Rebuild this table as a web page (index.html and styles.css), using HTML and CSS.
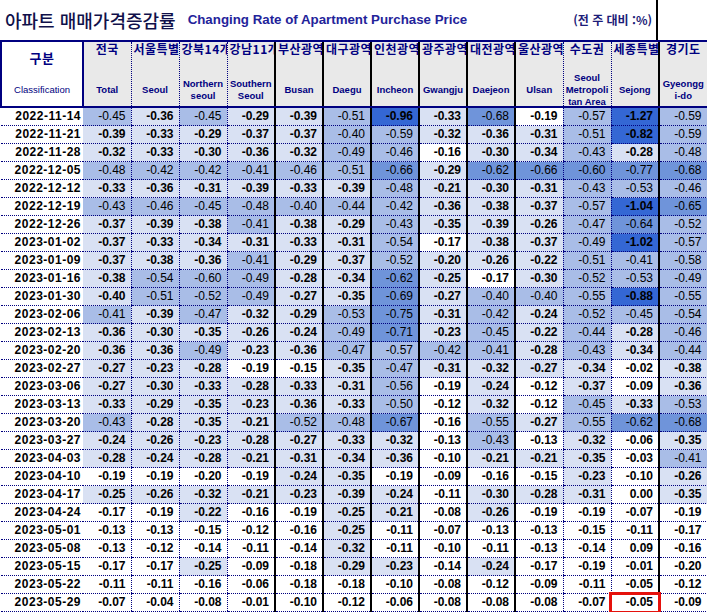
FILE: index.html
```html
<!DOCTYPE html>
<html lang="ko">
<head>
<meta charset="utf-8">
<title>아파트 매매가격증감률</title>
<link rel="stylesheet" href="styles.css">
</head>
<body>
<div class="titlebar">
  <div class="title-main">
    <span class="title-ko">아파트 매매가격증감률</span>
    <span class="title-en">Changing Rate of Apartment Purchase Price</span>
    <span class="unit">(전 주 대비 :%)</span>
  </div>
  <div class="title-side"></div>
</div>
<table class="grid">
  <colgroup>
    <col class="c-cls">
    <col class="c dot">
    <col class="c dot">
    <col class="c dot">
    <col class="c thick">
    <col class="c thick">
    <col class="c thick">
    <col class="c thick">
    <col class="c thick">
    <col class="c thick">
    <col class="c dot">
    <col class="c dot">
    <col class="c thick">
    <col class="c dot">
  </colgroup>
  <thead>
    <tr>
      <th class="cls"><div class="hd"><div class="ko ko-cls">구분</div><div class="en en-cls">Classification</div></div></th>
      <th><div class="hd"><div class="ko">전국</div><div class="en">Total</div></div></th>
      <th><div class="hd"><div class="ko ko-cut">서울특별</div><div class="en">Seoul</div></div></th>
      <th><div class="hd"><div class="ko ko-cut">강북14개</div><div class="en">Northern<br>seoul</div></div></th>
      <th><div class="hd"><div class="ko ko-cut">강남11개</div><div class="en">Southern<br>Seoul</div></div></th>
      <th><div class="hd"><div class="ko ko-cut">부산광역</div><div class="en">Busan</div></div></th>
      <th><div class="hd"><div class="ko ko-cut">대구광역</div><div class="en">Daegu</div></div></th>
      <th><div class="hd"><div class="ko ko-cut">인천광역</div><div class="en">Incheon</div></div></th>
      <th><div class="hd"><div class="ko ko-cut">광주광역</div><div class="en">Gwangju</div></div></th>
      <th><div class="hd"><div class="ko ko-cut">대전광역</div><div class="en">Daejeon</div></div></th>
      <th><div class="hd"><div class="ko ko-cut">울산광역</div><div class="en">Ulsan</div></div></th>
      <th><div class="hd"><div class="ko">수도권</div><div class="en en-clip">Seoul<br>Metropoli<br>tan Area</div></div></th>
      <th><div class="hd"><div class="ko ko-cut">세종특별</div><div class="en">Sejong</div></div></th>
      <th><div class="hd"><div class="ko">경기도</div><div class="en">Gyeongg<br>i-do</div></div></th>
    </tr>
  </thead>
  <tbody>
    <tr><td class="date">2022-11-14</td><td class="l2">-0.45</td><td class="l1">-0.36</td><td class="l2">-0.45</td><td class="l1">-0.29</td><td class="l1">-0.39</td><td class="l2">-0.51</td><td class="l4">-0.96</td><td class="l1">-0.33</td><td class="l3">-0.68</td><td>-0.19</td><td class="l2">-0.57</td><td class="l4">-1.27</td><td class="l2">-0.59</td></tr>
    <tr><td class="date">2022-11-21</td><td class="l1">-0.39</td><td class="l1">-0.33</td><td class="l1">-0.29</td><td class="l1">-0.37</td><td class="l1">-0.37</td><td class="l2">-0.40</td><td class="l2">-0.59</td><td class="l1">-0.32</td><td class="l1">-0.36</td><td class="l1">-0.31</td><td class="l2">-0.51</td><td class="l4">-0.82</td><td class="l2">-0.59</td></tr>
    <tr><td class="date">2022-11-28</td><td class="l1">-0.32</td><td class="l1">-0.33</td><td class="l1">-0.30</td><td class="l1">-0.36</td><td class="l1">-0.32</td><td class="l2">-0.49</td><td class="l2">-0.46</td><td>-0.16</td><td class="l1">-0.30</td><td class="l1">-0.34</td><td class="l2">-0.43</td><td class="l1">-0.28</td><td class="l2">-0.48</td></tr>
    <tr><td class="date">2022-12-05</td><td class="l2">-0.48</td><td class="l2">-0.42</td><td class="l2">-0.42</td><td class="l2">-0.41</td><td class="l2">-0.46</td><td class="l2">-0.51</td><td class="l3">-0.66</td><td class="l1">-0.29</td><td class="l3">-0.62</td><td class="l3">-0.66</td><td class="l3">-0.60</td><td class="l3">-0.77</td><td class="l3">-0.68</td></tr>
    <tr><td class="date">2022-12-12</td><td class="l1">-0.33</td><td class="l1">-0.36</td><td class="l1">-0.31</td><td class="l1">-0.39</td><td class="l1">-0.33</td><td class="l1">-0.39</td><td class="l2">-0.48</td><td class="l1">-0.21</td><td class="l1">-0.30</td><td class="l1">-0.31</td><td class="l2">-0.43</td><td class="l2">-0.53</td><td class="l2">-0.46</td></tr>
    <tr><td class="date">2022-12-19</td><td class="l2">-0.43</td><td class="l2">-0.46</td><td class="l2">-0.45</td><td class="l2">-0.48</td><td class="l2">-0.40</td><td class="l2">-0.44</td><td class="l2">-0.42</td><td class="l1">-0.36</td><td class="l1">-0.38</td><td class="l1">-0.37</td><td class="l2">-0.57</td><td class="l4">-1.04</td><td class="l3">-0.65</td></tr>
    <tr><td class="date">2022-12-26</td><td class="l1">-0.37</td><td class="l1">-0.39</td><td class="l1">-0.38</td><td class="l2">-0.41</td><td class="l1">-0.38</td><td class="l1">-0.29</td><td class="l2">-0.43</td><td class="l1">-0.35</td><td class="l1">-0.39</td><td class="l1">-0.26</td><td class="l2">-0.47</td><td class="l3">-0.64</td><td class="l2">-0.52</td></tr>
    <tr><td class="date">2023-01-02</td><td class="l1">-0.37</td><td class="l1">-0.33</td><td class="l1">-0.34</td><td class="l1">-0.31</td><td class="l1">-0.33</td><td class="l1">-0.31</td><td class="l2">-0.54</td><td>-0.17</td><td class="l1">-0.38</td><td class="l1">-0.37</td><td class="l2">-0.49</td><td class="l4">-1.02</td><td class="l2">-0.57</td></tr>
    <tr><td class="date">2023-01-09</td><td class="l1">-0.37</td><td class="l1">-0.38</td><td class="l1">-0.36</td><td class="l2">-0.41</td><td class="l1">-0.29</td><td class="l1">-0.37</td><td class="l2">-0.52</td><td class="l1">-0.20</td><td class="l1">-0.26</td><td class="l1">-0.22</td><td class="l2">-0.51</td><td class="l2">-0.41</td><td class="l2">-0.58</td></tr>
    <tr><td class="date">2023-01-16</td><td class="l1">-0.38</td><td class="l2">-0.54</td><td class="l2">-0.60</td><td class="l2">-0.49</td><td class="l1">-0.28</td><td class="l1">-0.34</td><td class="l3">-0.62</td><td class="l1">-0.25</td><td>-0.17</td><td class="l1">-0.30</td><td class="l2">-0.52</td><td class="l2">-0.53</td><td class="l2">-0.49</td></tr>
    <tr><td class="date">2023-01-30</td><td class="l1">-0.40</td><td class="l2">-0.51</td><td class="l2">-0.52</td><td class="l2">-0.49</td><td class="l1">-0.27</td><td class="l1">-0.35</td><td class="l3">-0.69</td><td class="l1">-0.27</td><td class="l2">-0.40</td><td class="l2">-0.40</td><td class="l2">-0.55</td><td class="l4">-0.88</td><td class="l2">-0.55</td></tr>
    <tr><td class="date">2023-02-06</td><td class="l2">-0.41</td><td class="l1">-0.39</td><td class="l2">-0.47</td><td class="l1">-0.32</td><td class="l1">-0.29</td><td class="l2">-0.53</td><td class="l3">-0.75</td><td class="l1">-0.31</td><td class="l2">-0.42</td><td class="l1">-0.24</td><td class="l2">-0.52</td><td class="l2">-0.45</td><td class="l2">-0.54</td></tr>
    <tr><td class="date">2023-02-13</td><td class="l1">-0.36</td><td class="l1">-0.30</td><td class="l1">-0.35</td><td class="l1">-0.26</td><td class="l1">-0.24</td><td class="l2">-0.49</td><td class="l3">-0.71</td><td class="l1">-0.23</td><td class="l2">-0.45</td><td class="l1">-0.22</td><td class="l2">-0.44</td><td class="l1">-0.28</td><td class="l2">-0.46</td></tr>
    <tr><td class="date">2023-02-20</td><td class="l1">-0.36</td><td class="l1">-0.36</td><td class="l2">-0.49</td><td class="l1">-0.23</td><td class="l1">-0.36</td><td class="l2">-0.47</td><td class="l2">-0.57</td><td class="l2">-0.42</td><td class="l2">-0.41</td><td class="l1">-0.28</td><td class="l2">-0.43</td><td class="l1">-0.34</td><td class="l2">-0.44</td></tr>
    <tr><td class="date">2023-02-27</td><td class="l1">-0.27</td><td class="l1">-0.23</td><td class="l1">-0.28</td><td>-0.19</td><td>-0.15</td><td class="l1">-0.35</td><td class="l2">-0.47</td><td class="l1">-0.31</td><td class="l1">-0.32</td><td class="l1">-0.27</td><td class="l1">-0.34</td><td>-0.02</td><td class="l1">-0.38</td></tr>
    <tr><td class="date">2023-03-06</td><td class="l1">-0.27</td><td class="l1">-0.30</td><td class="l1">-0.33</td><td class="l1">-0.28</td><td class="l1">-0.33</td><td class="l1">-0.31</td><td class="l2">-0.56</td><td>-0.19</td><td class="l1">-0.24</td><td>-0.12</td><td class="l1">-0.37</td><td>-0.09</td><td class="l1">-0.36</td></tr>
    <tr><td class="date">2023-03-13</td><td class="l1">-0.33</td><td class="l1">-0.29</td><td class="l1">-0.35</td><td class="l1">-0.23</td><td class="l1">-0.36</td><td class="l1">-0.33</td><td class="l2">-0.50</td><td>-0.12</td><td class="l1">-0.32</td><td>-0.12</td><td class="l2">-0.45</td><td class="l1">-0.33</td><td class="l2">-0.53</td></tr>
    <tr><td class="date">2023-03-20</td><td class="l2">-0.43</td><td class="l1">-0.28</td><td class="l1">-0.35</td><td class="l1">-0.21</td><td class="l2">-0.52</td><td class="l2">-0.48</td><td class="l3">-0.67</td><td>-0.16</td><td class="l2">-0.55</td><td class="l1">-0.27</td><td class="l2">-0.55</td><td class="l3">-0.62</td><td class="l3">-0.68</td></tr>
    <tr><td class="date">2023-03-27</td><td class="l1">-0.24</td><td class="l1">-0.26</td><td class="l1">-0.23</td><td class="l1">-0.28</td><td class="l1">-0.27</td><td class="l1">-0.33</td><td class="l1">-0.32</td><td>-0.13</td><td class="l2">-0.43</td><td>-0.13</td><td class="l1">-0.32</td><td>-0.06</td><td class="l1">-0.35</td></tr>
    <tr><td class="date">2023-04-03</td><td class="l1">-0.28</td><td class="l1">-0.24</td><td class="l1">-0.28</td><td class="l1">-0.21</td><td class="l1">-0.31</td><td class="l1">-0.34</td><td class="l1">-0.36</td><td>-0.10</td><td class="l1">-0.21</td><td class="l1">-0.21</td><td class="l1">-0.35</td><td>-0.03</td><td class="l2">-0.41</td></tr>
    <tr><td class="date">2023-04-10</td><td>-0.19</td><td>-0.19</td><td>-0.20</td><td>-0.19</td><td class="l1">-0.24</td><td class="l1">-0.35</td><td>-0.19</td><td>-0.09</td><td>-0.16</td><td>-0.15</td><td class="l1">-0.23</td><td>-0.10</td><td class="l1">-0.26</td></tr>
    <tr><td class="date">2023-04-17</td><td class="l1">-0.25</td><td class="l1">-0.26</td><td class="l1">-0.32</td><td class="l1">-0.21</td><td class="l1">-0.23</td><td class="l1">-0.39</td><td class="l1">-0.24</td><td>-0.11</td><td class="l1">-0.30</td><td class="l1">-0.28</td><td class="l1">-0.31</td><td>0.00</td><td class="l1">-0.35</td></tr>
    <tr><td class="date">2023-04-24</td><td>-0.17</td><td>-0.19</td><td class="l1">-0.22</td><td>-0.16</td><td>-0.19</td><td class="l1">-0.25</td><td class="l1">-0.21</td><td>-0.08</td><td class="l1">-0.26</td><td>-0.19</td><td>-0.19</td><td>-0.07</td><td>-0.19</td></tr>
    <tr><td class="date">2023-05-01</td><td>-0.13</td><td>-0.13</td><td>-0.15</td><td>-0.12</td><td>-0.16</td><td class="l1">-0.25</td><td>-0.11</td><td>-0.07</td><td>-0.13</td><td>-0.13</td><td>-0.15</td><td>-0.11</td><td>-0.17</td></tr>
    <tr><td class="date">2023-05-08</td><td>-0.13</td><td>-0.12</td><td>-0.14</td><td>-0.11</td><td>-0.14</td><td class="l1">-0.32</td><td>-0.11</td><td>-0.10</td><td>-0.11</td><td>-0.13</td><td>-0.14</td><td>0.09</td><td>-0.16</td></tr>
    <tr><td class="date">2023-05-15</td><td>-0.17</td><td>-0.17</td><td class="l1">-0.25</td><td>-0.09</td><td>-0.18</td><td class="l1">-0.29</td><td class="l1">-0.23</td><td>-0.14</td><td class="l1">-0.24</td><td>-0.17</td><td>-0.19</td><td>-0.01</td><td>-0.20</td></tr>
    <tr><td class="date">2023-05-22</td><td>-0.11</td><td>-0.11</td><td>-0.16</td><td>-0.06</td><td>-0.18</td><td>-0.18</td><td>-0.10</td><td>-0.08</td><td>-0.12</td><td>-0.09</td><td>-0.11</td><td>-0.05</td><td>-0.12</td></tr>
    <tr><td class="date">2023-05-29</td><td>-0.07</td><td>-0.04</td><td>-0.08</td><td>-0.01</td><td>-0.10</td><td>-0.12</td><td>-0.06</td><td>-0.08</td><td>-0.08</td><td>-0.08</td><td>-0.07</td><td class="sel">-0.05</td><td>-0.09</td></tr>
  </tbody>
</table>
</body>
</html>
```

FILE: styles.css
```css
body {
  margin: 0;
  background: #ffffff;
  font-family: "Liberation Sans", Arial, sans-serif;
  color: #000;
}

.titlebar {
  display: flex;
  width: 706px;
  height: 40px;
}

.title-main {
  flex: 1;
  display: flex;
  align-items: center;
  padding-left: 5px;
  padding-bottom: 1px;
  white-space: nowrap;
}

.title-ko {
  font-family: "Noto Sans CJK KR", sans-serif;
  font-size: 18px;
  font-weight: 500;
  color: #10104a;
}

.title-en {
  margin-left: 12px;
  font-family: "Liberation Sans", Arial, sans-serif;
  font-weight: bold;
  font-size: 13.3px;
  color: #23239a;
}

.unit {
  margin-left: auto;
  margin-right: 4px;
  font-family: "Noto Sans CJK KR", sans-serif;
  font-weight: bold;
  font-size: 12px;
  color: #1c1c78;
}

.title-side {
  width: 48px;
  border-left: 2px solid #000;
}

.grid {
  border-collapse: collapse;
  table-layout: fixed;
  width: 706px;
}

.c-cls { width: 82px; }
.c { width: 48px; }
.dot { border-right: 1px dotted #000080; }
.thick { border-right: 2px solid #000; }

thead th {
  padding: 0;
  background: #e9e9e9;
  border-top: 2px solid #000080;
  border-bottom: 2px solid #000080;
  vertical-align: top;
  font-weight: normal;
}

thead th.cls {
  background: #ffffff;
  border-left: 2px solid #000080;
  border-right: 2px solid #000080;
}

.hd {
  height: 64px;
  display: flex;
  flex-direction: column;
}

.ko {
  height: 13px;
  line-height: 13px;
  padding: 0 2px;
  font-family: "Noto Sans CJK KR", sans-serif;
  font-weight: bold;
  font-size: 12px;
  letter-spacing: 0.5px;
  color: #000080;
  white-space: nowrap;
  text-align: center;
}

.ko-cut {
  text-align: left;
  overflow-x: clip;
}

.ko-cls {
  margin-top: 9px;
  font-size: 13px;
}

.en {
  margin-top: auto;
  height: 32px;
  flex-shrink: 0;
  display: flex;
  align-items: center;
  justify-content: center;
  text-align: center;
  font-family: "Liberation Sans", Arial, sans-serif;
  font-weight: bold;
  font-size: 9.5px;
  line-height: 12px;
  color: #000080;
}

.en-clip {
  overflow: hidden;
}

.en-cls {
  font-weight: normal;
  font-size: 9.5px;
}

tbody td {
  height: 17px;
  padding: 0 5px 0 0;
  text-align: right;
  font-size: 12px;
  font-weight: bold;
  line-height: 17px;
  white-space: nowrap;
  border-bottom: 1px dotted #000080;
  background: #ffffff;
}

tbody td.date {
  padding-right: 2px;
  letter-spacing: 0.5px;
}

td.l1 { background: #d9e1f3; }
td.l2 { background: #a9bde7; font-weight: normal; }
td.l3 { background: #6f94da; font-weight: normal; }
td.l4 { background: #3467d4; }

td.sel {
  outline: 3px solid #e5110c;
  outline-offset: -1px;
}
```
